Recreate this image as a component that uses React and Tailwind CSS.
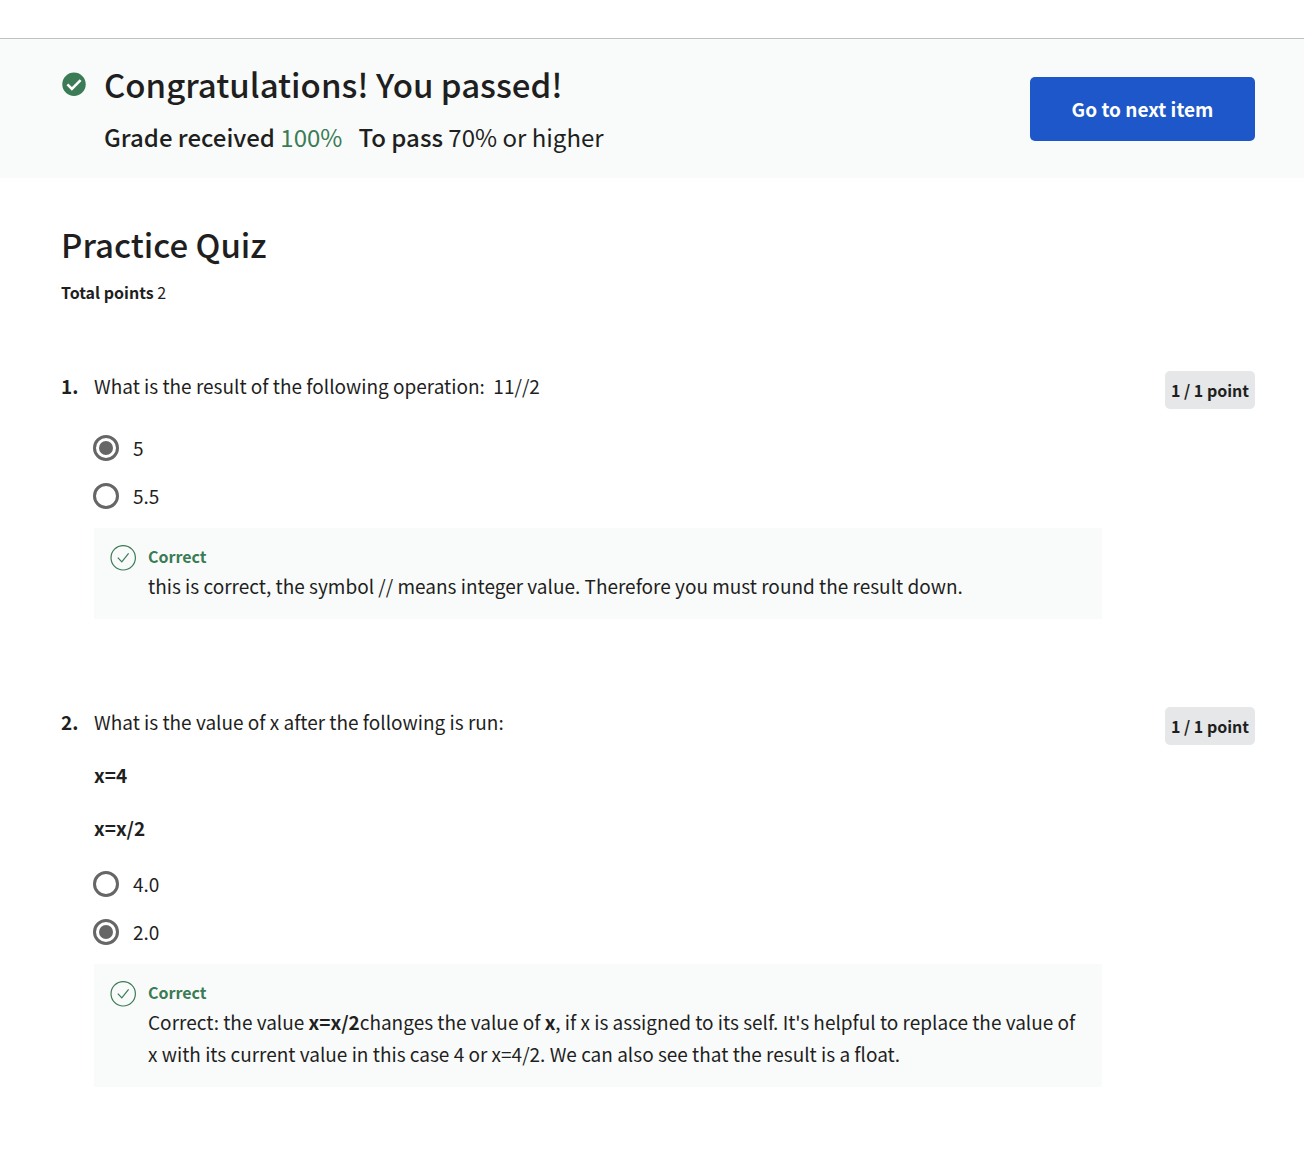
function CheckBadge() {
  return (
    <svg viewBox="0 0 24 24" className="mt-3 size-6 shrink-0" aria-hidden="true">
      <circle cx="12" cy="12.3" r="11.7" fill="#3b7b55" />
      <path d="M5.4 12.3 9.9 16.9 18.6 8.2" fill="none" stroke="#fff" strokeWidth="2.6" />
    </svg>
  );
}

function CheckOutline() {
  return (
    <svg viewBox="0 0 26 26" className="mt-0.5 size-[26px] shrink-0" fill="none" stroke="#3b7b55" aria-hidden="true">
      <circle cx="13.2" cy="12.8" r="12.2" strokeWidth="1.2" />
      <path d="M7.8 12.6 11.8 16.9 18.6 8.3" strokeWidth="1.2" />
    </svg>
  );
}

function Option({ name, label, checked }) {
  return (
    <label className="flex h-12 items-center gap-3.5">
      <input
        type="radio"
        name={name}
        defaultChecked={checked}
        className="-ml-px size-[26px] shrink-0 appearance-none rounded-full border-3 border-[#666666] bg-clip-content p-[3px] checked:bg-[#666666]"
      />
      {label}
    </label>
  );
}

function Feedback({ children }) {
  return (
    <div className="mt-2 flex max-w-[1008px] gap-3 bg-[#f9fbfa] px-4 pt-[15px] pb-[17px]">
      <CheckOutline />
      <div>
        <p className="text-base leading-[27px] font-bold text-[#3b7b55]">Correct</p>
        <p className="leading-8">{children}</p>
      </div>
    </div>
  );
}

function Points() {
  return (
    <span className="flex h-[38px] w-[90px] shrink-0 items-center justify-center rounded-[5px] bg-[#e5e7e8] text-base font-bold">
      1 / 1 point
    </span>
  );
}

function Question({ number, title, code = [], options, feedback }) {
  return (
    <section className="flex items-start text-[19px] leading-[30px]">
      <span className="w-[33px] shrink-0 font-bold">{number}.</span>
      <div className="min-w-0 flex-1">
        <p className="whitespace-pre-wrap">{title}</p>
        {code.map((line) => (
          <p key={line} className="mt-[23px] font-bold">
            {line}
          </p>
        ))}
        <div className={code.length ? 'mt-[17px]' : 'mt-[23px]'}>
          {options.map((option) => (
            <Option key={option.label} name={`question-${number}`} {...option} />
          ))}
        </div>
        <Feedback>{feedback}</Feedback>
      </div>
      <Points />
    </section>
  );
}

export default function App() {
  return (
    <div className="bg-white pt-[38px] font-['Noto_Sans_CJK_SC',sans-serif] text-[#1f1f1f]">
      <header className="flex items-start justify-between border-t border-[#c1c1c1] bg-[#f9fbfa] pt-[21px] pr-[49px] pb-[25px] pl-[62px]">
        <div className="flex gap-[18px]">
          <CheckBadge />
          <div>
            <h1 className="text-[33px] leading-[48px] font-medium">Congratulations! You passed!</h1>
            <p className="mt-[13px] text-2xl leading-8">
              <span className="font-medium">Grade received</span> <span className="text-[#3b7b55]">100%</span>
              <span className="ml-4 font-medium">To pass</span> 70% or higher
            </p>
          </div>
        </div>
        <button className="mt-[17px] h-16 w-[225px] rounded-[5px] bg-[#1d57c9] text-[19px] font-bold text-white">
          Go to next item
        </button>
      </header>
      <main className="pt-[42px] pr-[49px] pb-[71px] pl-[61px]">
        <h2 className="text-[33px] leading-[48px] font-medium">Practice Quiz</h2>
        <p className="mt-3 text-base leading-6">
          <b>Total points</b> 2
        </p>
        <div className="mt-[67px] flex flex-col gap-[88px]">
          <Question
            number={1}
            title={'What is the result of the following operation:  11//2'}
            options={[{ label: '5', checked: true }, { label: '5.5' }]}
            feedback="this is correct, the symbol // means integer value. Therefore you must round the result down."
          />
          <Question
            number={2}
            title="What is the value of x after the following is run:"
            code={['x=4', 'x=x/2']}
            options={[{ label: '4.0' }, { label: '2.0', checked: true }]}
            feedback={
              <>
                Correct: the value <b>x=x/2</b>changes the value of <b>x</b>, if x is assigned to its self. It's
                helpful to replace the value of x with its current value in this case 4 or x=4/2. We can also see that
                the result is a float.
              </>
            }
          />
        </div>
      </main>
    </div>
  );
}
